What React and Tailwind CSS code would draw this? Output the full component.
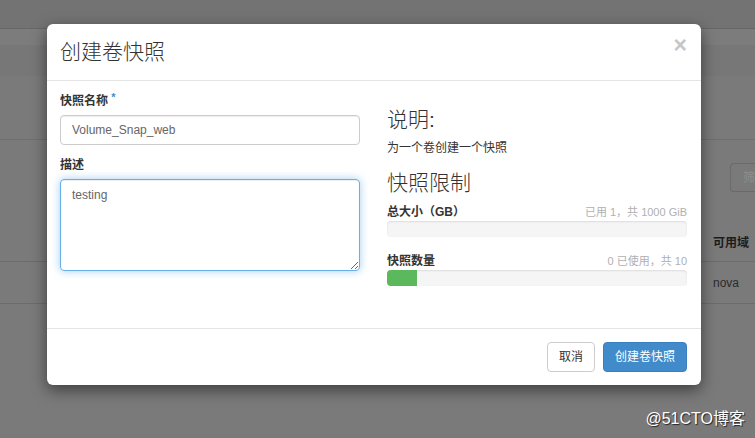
import React from "react";

const font = { fontFamily: '"Liberation Sans", "Noto Sans CJK SC", sans-serif' };

function Background() {
  return (
    <div className="flex flex-col w-full h-full">
      <div className="h-[28px] bg-[#737373]" />
      <div className="h-px bg-[#666666]" />
      <div className="h-[16px] bg-[#7c7c7c]" />
      <div className="h-[31px] bg-[#777777]" />
      <div className="h-[64px] bg-[#7a7a7a] border-b border-[#6f6f6f]" />
      <div className="h-[122px] bg-[#7a7a7a] border-b border-[#6c6c6c] flex flex-col items-end">
        <div className="mt-[23px] w-[25px] h-[29px] rounded-l-[4px] border border-r-0 border-[#6a6a6a] flex items-center pl-[12px] text-[12px] text-[#8e8e8e] overflow-hidden whitespace-nowrap">
          筛
        </div>
        <div className="mt-auto mb-[9px] w-[42px] text-[12px] font-bold text-[#1c1c1c]">可用域</div>
      </div>
      <div className="h-[42px] bg-[#7a7a7a] border-b border-[#6c6c6c] flex items-center justify-end">
        <div className="w-[42px] text-[12px] text-[#2a2a2a]">nova</div>
      </div>
      <div className="flex-1 bg-[#7a7a7a]" />
    </div>
  );
}

function Bar({ label, info, pct }) {
  return (
    <div className="flex flex-col">
      <div className="flex items-end justify-between h-[16px] leading-[16px]">
        <span className="text-[12px] font-bold text-[#333]">{label}</span>
        <span className="text-[11px] text-[#b0b0b0]">{info}</span>
      </div>
      <div className="mt-[1px] h-[16px] rounded-[4px] bg-[#f5f5f5] shadow-[inset_0_1px_2px_rgba(0,0,0,0.1)] overflow-hidden">
        {pct > 0 && <div className="h-full bg-[#5cb85c]" style={{ width: pct + "%" }} />}
      </div>
    </div>
  );
}

export default function App() {
  return (
    <div className="relative w-[755px] h-[438px] overflow-hidden" style={font}>
      <Background />

      <div className="absolute left-[47px] top-[24px] w-[654px] h-[361px] bg-white rounded-[6px] shadow-[0_5px_15px_rgba(0,0,0,0.5)] flex flex-col">
        <div className="h-[57px] border-b border-[#e5e5e5] flex items-center justify-between pl-[13px] pr-[14px]">
          <h4 className="text-[21px] font-light text-[#333] leading-[24px]">创建卷快照</h4>
          <span className="text-[23px] font-bold text-[#c6c6c6] leading-none -mt-[14px]">×</span>
        </div>

        <div className="flex-1 flex gap-[27px] px-[13px] pt-[12px]">
          <div className="w-[300px] flex flex-col">
            <label className="h-[17px] leading-[17px] text-[12px] font-bold text-[#333]">
              快照名称 <span className="text-[#428bca] text-[11px] relative -top-[4px]">*</span>
            </label>
            <input
              readOnly
              defaultValue="Volume_Snap_web"
              className="mt-[5px] h-[30px] w-full rounded-[4px] border border-[#cccccc] px-[11px] text-[12px] text-[#666] outline-none shadow-[inset_0_1px_1px_rgba(0,0,0,0.075)]"
              style={font}
            />
            <label className="mt-[12px] h-[17px] leading-[17px] text-[12px] font-bold text-[#333]">描述</label>
            <textarea
              readOnly
              defaultValue="testing"
              className="mt-[5px] h-[92px] w-full rounded-[4px] border border-[#66afe9] px-[11px] py-[6px] text-[12px] text-[#666] outline-none shadow-[inset_0_1px_1px_rgba(0,0,0,0.075),0_0_8px_rgba(102,175,233,0.6)]"
              style={font}
            />
          </div>

          <div className="w-[300px] flex flex-col">
            <h3 className="mt-[15px] text-[21px] leading-[24px] font-light text-[#333]">说明:</h3>
            <p className="mt-[8px] text-[12px] leading-[17px] text-[#333]">为一个卷创建一个快照</p>
            <h3 className="mt-[14px] text-[21px] leading-[24px] font-light text-[#333]">快照限制</h3>
            <div className="mt-[9px]">
              <Bar label="总大小（GB）" info="已用 1，共 1000 GiB" pct={0} />
            </div>
            <div className="mt-[16px]">
              <Bar label="快照数量" info="0 已使用，共 10" pct={10} />
            </div>
          </div>
        </div>

        <div className="h-[57px] border-t border-[#e5e5e5] flex items-center justify-end gap-[8px] pr-[14px]">
          <button className="h-[30px] px-[11px] rounded-[4px] border border-[#cccccc] bg-white text-[12px] text-[#333]">取消</button>
          <button className="h-[30px] px-[11px] rounded-[4px] border border-[#3a80c0] bg-[#428bca] text-[12px] text-white">创建卷快照</button>
        </div>
      </div>

      <div className="absolute right-[10px] top-[407px] text-[16px] text-white [text-shadow:1px_1px_1px_rgba(0,0,0,0.7)]">
        @51CTO博客
      </div>
    </div>
  );
}
